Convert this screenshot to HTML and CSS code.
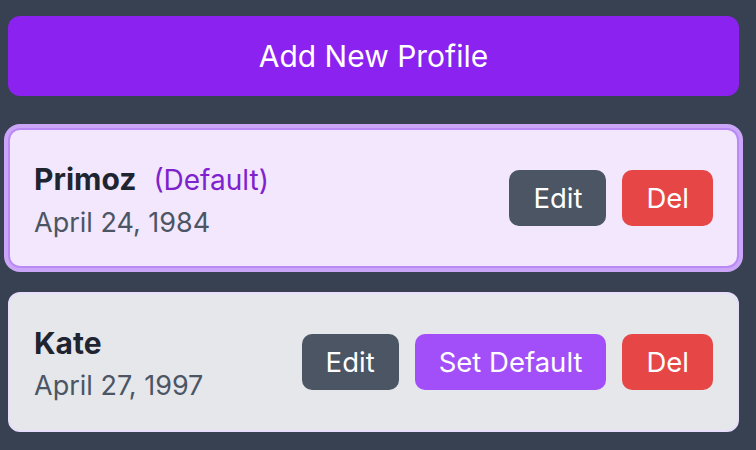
FILE: index.html
```html
<!DOCTYPE html>
<html lang="en">
<head>
<meta charset="utf-8">
<title>Profiles</title>
<link rel="stylesheet" href="styles.css">
</head>
<body>
<main class="page">
  <button class="add-btn">Add New Profile</button>
  <ul class="profiles">
    <li class="card card--default">
      <div class="info">
        <div class="name-row"><span class="name">Primoz</span><span class="default-tag">(Default)</span></div>
        <div class="date">April 24, 1984</div>
      </div>
      <div class="actions">
        <button class="btn btn--edit">Edit</button>
        <button class="btn btn--del">Del</button>
      </div>
    </li>
    <li class="card">
      <div class="info">
        <div class="name-row"><span class="name">Kate</span></div>
        <div class="date">April 27, 1997</div>
      </div>
      <div class="actions">
        <button class="btn btn--edit">Edit</button>
        <button class="btn btn--set">Set Default</button>
        <button class="btn btn--del">Del</button>
      </div>
    </li>
  </ul>
</main>
</body>
</html>
```
FILE: styles.css
```css
* { box-sizing: border-box; }
html, body {
  margin: 0;
  background: #374151;
  font-family: Inter, "Noto Sans", "Liberation Sans", sans-serif;
}
.page {
  padding: 16px 17px 18px 8px;
  display: flex;
  flex-direction: column;
}
.add-btn {
  height: 80px;
  border: none;
  border-radius: 12px;
  background: #8b22f0;
  color: #ffffff;
  font-family: inherit;
  font-size: 30px;
  margin-bottom: 32px;
}
.profiles {
  list-style: none;
  margin: 0;
  padding: 0;
  display: flex;
  flex-direction: column;
  gap: 24px;
}
.card {
  height: 140px;
  border-radius: 12px;
  background: #e5e7eb;
  border: 2px solid #e6defa;
  display: flex;
  align-items: center;
  justify-content: space-between;
  padding: 0 24px;
}
.card--default {
  background: #f2e7fd;
  border-color: #b98af5;
  box-shadow: 0 0 0 4px #cba6f8;
}
.info {
  display: flex;
  flex-direction: column;
  gap: 8px;
  padding-top: 4px;
}
.name-row {
  display: flex;
  align-items: baseline;
  gap: 17px;
  line-height: 36px;
}
.name {
  font-size: 30px;
  font-weight: 700;
  color: #1f2530;
}
.default-tag {
  font-size: 28px;
  color: #7e22ce;
}
.date {
  font-size: 27px;
  line-height: 34px;
  color: #4b5563;
}
.actions {
  display: flex;
  gap: 16px;
}
.btn {
  height: 56px;
  padding: 0 24px;
  border: none;
  border-radius: 10px;
  color: #ffffff;
  font-family: inherit;
  font-size: 27.5px;
}
.btn--edit { background: #4b5563; }
.btn--set { background: #a34ff9; }
.btn--del { background: #e64646; }
```
